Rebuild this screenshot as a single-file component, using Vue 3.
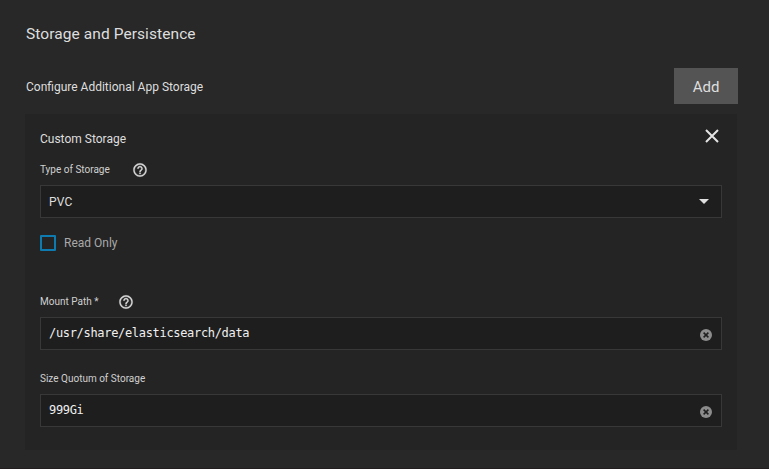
<script setup>
import { ref } from 'vue'

const mountPath = ref('/usr/share/elasticsearch/data')
const quota = ref('999Gi')
</script>

<template>
  <main class="page">
    <h2 class="title">Storage and Persistence</h2>
    <div class="toolbar">
      <span class="subtitle">Configure Additional App Storage</span>
      <button class="add" type="button">Add</button>
    </div>
    <section class="card">
      <header class="card-head">
        <span class="card-title">Custom Storage</span>
        <svg class="close" viewBox="0 0 14 14"><path d="M1 1L13 13M13 1L1 13" /></svg>
      </header>
      <div class="label">
        <span class="label-text type-text">Type of Storage</span>
        <svg class="help" viewBox="0 0 24 24"><path d="M11 18h2v-2h-2v2zm1-16C6.48 2 2 6.48 2 12s4.48 10 10 10 10-4.48 10-10S17.52 2 12 2zm0 18c-4.41 0-8-3.59-8-8s3.59-8 8-8 8 3.59 8 8-3.59 8-8 8zm0-14c-2.21 0-4 1.79-4 4h2c0-1.1.9-2 2-2s2 .9 2 2c0 2-3 1.75-3 5h2c0-2.25 3-2.5 3-5 0-2.21-1.79-4-4-4z" /></svg>
      </div>
      <div class="field select">
        <span class="select-text">PVC</span>
        <svg class="arrow" viewBox="0 0 10 5"><path d="M0 0h10L5 5z" /></svg>
      </div>
      <div class="check">
        <span class="box"></span>
        <span class="check-text">Read Only</span>
      </div>
      <div class="label mount">
        <span class="label-text mount-text">Mount Path *</span>
        <svg class="help" viewBox="0 0 24 24"><path d="M11 18h2v-2h-2v2zm1-16C6.48 2 2 6.48 2 12s4.48 10 10 10 10-4.48 10-10S17.52 2 12 2zm0 18c-4.41 0-8-3.59-8-8s3.59-8 8-8 8 3.59 8 8-3.59 8-8 8zm0-14c-2.21 0-4 1.79-4 4h2c0-1.1.9-2 2-2s2 .9 2 2c0 2-3 1.75-3 5h2c0-2.25 3-2.5 3-5 0-2.21-1.79-4-4-4z" /></svg>
      </div>
      <div class="field">
        <span class="mono">{{ mountPath }}</span>
        <svg class="clear" viewBox="0 0 12 12"><circle cx="6" cy="6" r="6" /><path d="M3.6 3.6l4.8 4.8M8.4 3.6L3.6 8.4" /></svg>
      </div>
      <div class="label size">
        <span class="label-text">Size Quotum of Storage</span>
      </div>
      <div class="field">
        <span class="mono">{{ quota }}</span>
        <svg class="clear" viewBox="0 0 12 12"><circle cx="6" cy="6" r="6" /><path d="M3.6 3.6l4.8 4.8M8.4 3.6L3.6 8.4" /></svg>
      </div>
    </section>
  </main>
</template>

<style>
body {
  margin: 0;
  background: #282828;
}
</style>

<style scoped>
.page {
  box-sizing: border-box;
  height: 469px;
  padding: 22px 31px 0 25px;
  overflow: hidden;
  border-bottom: 1px solid #221e1f;
  background: #282828;
  color: #dedede;
  font-family: Roboto, sans-serif;
  white-space: nowrap;
}
.title {
  margin: 0 0 0 1px;
  height: 24px;
  line-height: 25px;
  font-size: 15.5px;
  font-weight: 400;
  letter-spacing: 0.08px;
}
.toolbar {
  display: flex;
  align-items: center;
  justify-content: space-between;
  height: 36px;
  margin-top: 22px;
  padding-left: 1px;
}
.subtitle {
  padding-top: 2px;
  font-size: 12px;
}
.add {
  width: 64px;
  height: 36px;
  padding: 2px 0 0;
  border: 0;
  background: #545454;
  color: #dedede;
  font: 15px/34px Roboto, sans-serif;
}
.card {
  box-sizing: border-box;
  width: 712px;
  height: 336px;
  margin-top: 10px;
  padding: 15px 15px 0;
  background: #242424;
}
.card-head {
  display: flex;
  justify-content: space-between;
  height: 20px;
}
.card-title {
  font-size: 12px;
  line-height: 20px;
}
.close {
  width: 14px;
  height: 14px;
  margin: 0 3px 0 0;
  fill: none;
  stroke: #e4e4e4;
  stroke-width: 2;
}
.label {
  display: flex;
  align-items: center;
  height: 18px;
  margin-top: 12px;
  font-size: 10px;
  color: #d0d0d0;
}
.label-text {
  padding-bottom: 2px;
}
.help {
  width: 16px;
  height: 16px;
  fill: #d8d8d8;
  stroke: #d8d8d8;
  stroke-width: 0.4;
}
.type-text {
  width: 92.3px;
}
.mount-text {
  width: 78.4px;
}
.field {
  box-sizing: border-box;
  display: flex;
  align-items: center;
  justify-content: space-between;
  width: 682px;
  height: 33px;
  margin-top: 6px;
  padding: 0 9px 0 8px;
  border: 1px solid #383838;
  background: #1e1e1e;
}
.select {
  padding-right: 12px;
}
.select-text {
  font-size: 12px;
  letter-spacing: 0.2px;
}
.arrow {
  width: 10px;
  height: 5px;
  fill: #e0e0e0;
}
.check {
  display: flex;
  align-items: center;
  gap: 8px;
  height: 16px;
  margin-top: 17px;
}
.box {
  box-sizing: border-box;
  width: 16px;
  height: 16px;
  border: 2px solid #0d7bb0;
  border-radius: 1px;
}
.check-text {
  font-size: 12px;
  color: #a9a9a9;
}
.mount {
  margin-top: 42px;
}
.size {
  margin-top: 20px;
}
.mono {
  padding-bottom: 2px;
  color: #f0f0f0;
  font: 12px/16px "DejaVu Sans Mono", monospace;
  letter-spacing: -0.32px;
}
.clear {
  width: 12px;
  height: 12px;
  margin-top: 2px;
  fill: #8c8c8c;
  stroke: none;
}
.clear path {
  stroke: #1e1e1e;
  stroke-width: 1.5;
}
</style>
